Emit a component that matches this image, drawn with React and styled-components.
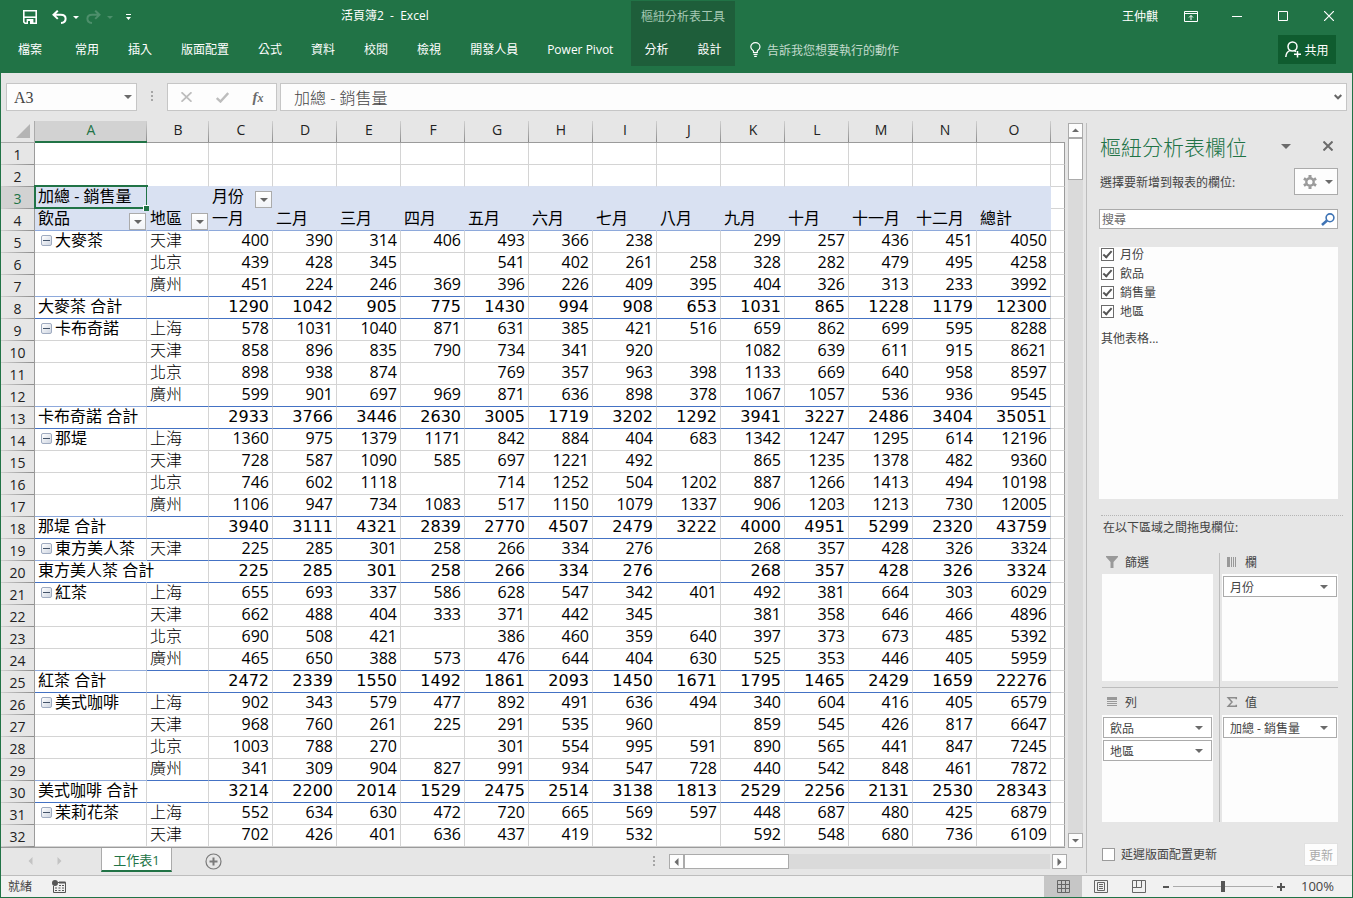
import React, { useState } from 'react';
import styled, { createGlobalStyle } from 'styled-components';

const GREEN = '#217346';
const UI_FONT = '"Open Sans", "Noto Sans CJK TC", sans-serif';

const columns = ['A', 'B', 'C', 'D', 'E', 'F', 'G', 'H', 'I', 'J', 'K', 'L', 'M', 'N', 'O'];

const months = ['一月', '二月', '三月', '四月', '五月', '六月', '七月', '八月', '九月', '十月', '十一月', '十二月', '總計'];

// '-' is an empty cell
const groups = [
  {
    name: '大麥茶',
    rows: [
      ['天津', '400 390 314 406 493 366 238 - 299 257 436 451 4050'],
      ['北京', '439 428 345 - 541 402 261 258 328 282 479 495 4258'],
      ['廣州', '451 224 246 369 396 226 409 395 404 326 313 233 3992'],
    ],
    total: '1290 1042 905 775 1430 994 908 653 1031 865 1228 1179 12300',
  },
  {
    name: '卡布奇諾',
    rows: [
      ['上海', '578 1031 1040 871 631 385 421 516 659 862 699 595 8288'],
      ['天津', '858 896 835 790 734 341 920 - 1082 639 611 915 8621'],
      ['北京', '898 938 874 - 769 357 963 398 1133 669 640 958 8597'],
      ['廣州', '599 901 697 969 871 636 898 378 1067 1057 536 936 9545'],
    ],
    total: '2933 3766 3446 2630 3005 1719 3202 1292 3941 3227 2486 3404 35051',
  },
  {
    name: '那堤',
    rows: [
      ['上海', '1360 975 1379 1171 842 884 404 683 1342 1247 1295 614 12196'],
      ['天津', '728 587 1090 585 697 1221 492 - 865 1235 1378 482 9360'],
      ['北京', '746 602 1118 - 714 1252 504 1202 887 1266 1413 494 10198'],
      ['廣州', '1106 947 734 1083 517 1150 1079 1337 906 1203 1213 730 12005'],
    ],
    total: '3940 3111 4321 2839 2770 4507 2479 3222 4000 4951 5299 2320 43759',
  },
  {
    name: '東方美人茶',
    rows: [['天津', '225 285 301 258 266 334 276 - 268 357 428 326 3324']],
    total: '225 285 301 258 266 334 276 - 268 357 428 326 3324',
  },
  {
    name: '紅茶',
    rows: [
      ['上海', '655 693 337 586 628 547 342 401 492 381 664 303 6029'],
      ['天津', '662 488 404 333 371 442 345 - 381 358 646 466 4896'],
      ['北京', '690 508 421 - 386 460 359 640 397 373 673 485 5392'],
      ['廣州', '465 650 388 573 476 644 404 630 525 353 446 405 5959'],
    ],
    total: '2472 2339 1550 1492 1861 2093 1450 1671 1795 1465 2429 1659 22276',
  },
  {
    name: '美式咖啡',
    rows: [
      ['上海', '902 343 579 477 892 491 636 494 340 604 416 405 6579'],
      ['天津', '968 760 261 225 291 535 960 - 859 545 426 817 6647'],
      ['北京', '1003 788 270 - 301 554 995 591 890 565 441 847 7245'],
      ['廣州', '341 309 904 827 991 934 547 728 440 542 848 461 7872'],
    ],
    total: '3214 2200 2014 1529 2475 2514 3138 1813 2529 2256 2131 2530 28343',
  },
  {
    name: '茉莉花茶',
    rows: [
      ['上海', '552 634 630 472 720 665 569 597 448 687 480 425 6879'],
      ['天津', '702 426 401 636 437 419 532 - 592 548 680 736 6109'],
    ],
  },
];

const split = (text) => text.split(' ').map((v) => (v === '-' ? '' : v));

const pivotRows = groups.flatMap((group) => {
  const list = group.rows.map(([city, values], i) => ({
    label: i === 0 ? group.name : '',
    city,
    values: split(values),
    last: Boolean(group.total) && i === group.rows.length - 1,
  }));
  if (group.total) {
    list.push({ label: `${group.name} 合計`, city: '', values: split(group.total), total: true });
  }
  return list;
});

function App() {
  return (
    <>
      <GlobalStyle />
      <Window>
        <TitleRibbon />
        <FormulaBar />
        <Workspace>
          <SheetArea>
            <GridRow>
              <Sheet />
              <VerticalScroll />
            </GridRow>
            <SheetTabs />
          </SheetArea>
          <FieldPane />
        </Workspace>
        <StatusBar />
      </Window>
    </>
  );
}

function TitleRibbon() {
  return (
    <Ribbon>
      <RibbonLeft>
        <TitleRow>
          <QuickAccess>
            <IconButton $w={30} aria-label="儲存">
              <svg width="14" height="14" viewBox="0 0 14 14" fill="none" stroke="#fff" strokeWidth="1.6">
                <path d="M.8 .8h12.4v12.4H2L.8 12z" />
                <path d="M.8 7.2h12.4" />
                <path d="M3.6 9h6.8v5H3.6z" fill="#fff" stroke="none" />
                <path d="M5 11h2v3H5z" fill={GREEN} stroke="none" />
              </svg>
            </IconButton>
            <IconButton $w={28} aria-label="復原">
              <UndoIcon />
            </IconButton>
            <Caret $color="#fff" $size={3} />
            <IconButton $w={28} aria-label="取消復原">
              <UndoIcon flip />
            </IconButton>
            <Caret $color="#4d8f6b" $size={3} />
            <IconButton $w={30} aria-label="自訂快速存取工具列">
              <svg width="7" height="7" viewBox="0 0 7 7" fill="#fff">
                <path d="M1 0h5v1H1zM1 3h5L3.500 6z" />
              </svg>
            </IconButton>
          </QuickAccess>
          <DocTitle>活頁簿2&nbsp; -&nbsp; Excel</DocTitle>
        </TitleRow>
        <TabRow>
          <FileTab>檔案</FileTab>
          {['常用', '插入', '版面配置', '公式', '資料', '校閱', '檢視', '開發人員', 'Power Pivot'].map((t) => (
            <Tab key={t}>{t}</Tab>
          ))}
        </TabRow>
      </RibbonLeft>
      <ContextTabs>
        <ContextTitle>樞紐分析表工具</ContextTitle>
        <ContextRow>
          <Tab>分析</Tab>
          <Tab>設計</Tab>
        </ContextRow>
      </ContextTabs>
      <RibbonRight>
        <WindowRow>
          <UserName>王仲麒</UserName>
          <IconButton $w={46} aria-label="功能區顯示選項">
            <svg width="14" height="11" viewBox="0 0 14 11" fill="none" stroke="#fff">
              <path d="M.5 .5h13v10H.5zM.5 2.500h13M7 9V4.500M5 6.500l2-2 2 2" />
            </svg>
          </IconButton>
          <IconButton $w={46} aria-label="最小化">
            <svg width="10" height="10" viewBox="0 0 10 10" stroke="#fff">
              <path d="M0 5.500h10" />
            </svg>
          </IconButton>
          <IconButton $w={46} aria-label="最大化">
            <svg width="10" height="10" viewBox="0 0 10 10" fill="none" stroke="#fff">
              <path d="M.5 .5h9v9h-9z" />
            </svg>
          </IconButton>
          <IconButton $w={46} aria-label="關閉">
            <svg width="10" height="10" viewBox="0 0 10 10" stroke="#fff" strokeWidth="1.200">
              <path d="M0 0l10 10M10 0L0 10" />
            </svg>
          </IconButton>
        </WindowRow>
        <TellRow>
          <TellMe>
            <svg width="11" height="15" viewBox="0 0 11 15" fill="none" stroke="#fff" strokeWidth="1.200">
              <path d="M3.500 10.500V9C1.800 7.700.8 6.500.8 4.900a4.600 4.300 0 0 1 9.200 0C10 6.500 9 7.700 7.300 9v1.500z" />
              <path d="M3.500 12.300h4M4.200 14.300h2.600" />
            </svg>
            告訴我您想要執行的動作
          </TellMe>
          <ShareButton>
            <svg width="16" height="17" viewBox="0 0 16 17" fill="none" stroke="#fff" strokeWidth="1.500">
              <circle cx="7.500" cy="5.500" r="4.500" />
              <path d="M.8 16c.2-3.600 2-5.800 4.700-6.600M9.500 9.600l1.500 1M9 13.300h7M12.500 10v6.600" />
            </svg>
            共用
          </ShareButton>
        </TellRow>
      </RibbonRight>
    </Ribbon>
  );
}

const UndoIcon = ({ flip }) => (
  <svg width="15" height="14" viewBox="0 0 15 14" fill="none" stroke={flip ? '#4d8f6b' : '#fff'} strokeWidth="2">
    <g transform={flip ? 'translate(15 0) scale(-1 1)' : undefined}>
      <path d="M5.800 .7L1.500 4.800l4.300 4.100M1.800 4.800h7c3 0 4.800 1.500 4.800 3.900 0 2.600-1.800 4-4.600 4.200" />
    </g>
  </svg>
);

function FormulaBar() {
  return (
    <FormulaRow>
      <NameBox>
        <NameInput aria-label="名稱方塊" defaultValue="A3" />
        <PlainButton aria-label="名稱清單">
          <Caret $color="#6b6b6b" $size={4} />
        </PlainButton>
      </NameBox>
      <Grip />
      <FxBox>
        <IconButton $w={36} aria-label="取消">
          <svg width="11" height="10" viewBox="0 0 11 10" stroke="#bdbdbd" strokeWidth="1.800">
            <path d="M.5 .3l10 9.400M10.500 .3L.5 9.700" />
          </svg>
        </IconButton>
        <IconButton $w={36} aria-label="輸入">
          <svg width="13" height="11" viewBox="0 0 13 11" fill="none" stroke="#bdbdbd" strokeWidth="2.400">
            <path d="M.8 6l3.700 3.500L12.200 1" />
          </svg>
        </IconButton>
        <FxButton>
          f<sub>x</sub>
        </FxButton>
      </FxBox>
      <FormulaBox>
        <FormulaInput aria-label="資料編輯列" defaultValue="加總 - 銷售量" />
        <PlainButton aria-label="展開資料編輯列">
          <svg width="8" height="6" viewBox="0 0 8 6" fill="none" stroke="#666" strokeWidth="2">
            <path d="M.7 1L4 4.300 7.300 1" />
          </svg>
        </PlainButton>
      </FormulaBox>
    </FormulaRow>
  );
}

const FilterButton = () => (
  <DropSquare aria-label="篩選">
    <Caret $color="#666" $size={4} />
  </DropSquare>
);

function Sheet() {
  return (
    <SheetPort>
      <Table>
        <colgroup>
          <Col $w={34} />
          <Col $w={112} />
          <Col $w={62} />
          {months.slice(0, 12).map((m) => (
            <Col key={m} $w={64} />
          ))}
          <Col $w={74} />
          <col />
        </colgroup>
        <thead>
          <tr>
            <Corner>
              <svg width="14" height="14" viewBox="0 0 14 14" fill="#b4b4b4">
                <path d="M14 0v14H0z" />
              </svg>
            </Corner>
            {columns.map((c) => (
              <ColHead key={c} scope="col" $active={c === 'A'}>
                {c}
              </ColHead>
            ))}
            <ColHead aria-hidden="true" $plain />
          </tr>
        </thead>
        <tbody>
          {[1, 2].map((n) => (
            <tr key={n}>
              <RowHead scope="row">{n}</RowHead>
              {columns.map((c) => (
                <Cell key={c} $line={n === 2 ? '#d9e1f2' : undefined} />
              ))}
              <Cell />
            </tr>
          ))}
          <tr>
            <RowHead scope="row" $active>3</RowHead>
            <HeadCell $selected>
              加總 - 銷售量
              <FillHandle />
            </HeadCell>
            <HeadCell />
            <HeadCell $filter>
              <CellRow>月份<FilterButton /></CellRow>
            </HeadCell>
            {columns.slice(3).map((c) => (
              <HeadCell key={c} />
            ))}
            <Cell />
          </tr>
          <tr>
            <RowHead scope="row">4</RowHead>
            <HeadCell $filter $line="#8ea9db">
              <CellRow>飲品<FilterButton /></CellRow>
            </HeadCell>
            <HeadCell $filter $line="#8ea9db">
              <CellRow>地區<FilterButton /></CellRow>
            </HeadCell>
            {months.map((m) => (
              <HeadCell key={m} $line="#8ea9db">{m}</HeadCell>
            ))}
            <Cell />
          </tr>
          {pivotRows.map((row, i) => {
            const line = row.total || row.last ? '#4472c4' : undefined;
            return (
              <tr key={i}>
                <RowHead scope="row">{i + 5}</RowHead>
                <Cell $medium $line={row.last ? '#8ea9db' : line} $spill={row.label.length > 7}>
                  {row.total ? (
                    row.label
                  ) : (
                    row.label && (
                      <GroupLabel>
                        <Collapse aria-label="摺疊">
                          <svg width="7" height="1"><path d="M0 0h7v1H0z" fill="#44546a" /></svg>
                        </Collapse>
                        {row.label}
                      </GroupLabel>
                    )
                  )}
                </Cell>
                <Cell $line={line}>{row.city}</Cell>
                {row.values.map((v, k) => (
                  <NumberCell key={k} $line={line} $total={row.total}>{v}</NumberCell>
                ))}
                <Cell />
              </tr>
            );
          })}
        </tbody>
      </Table>
    </SheetPort>
  );
}

function VerticalScroll() {
  return (
    <VScroll>
      <ScrollButton aria-label="向上捲動"><Arrow dir="up" /></ScrollButton>
      <VThumb />
      <Spacer />
      <ScrollButton aria-label="向下捲動"><Arrow dir="down" /></ScrollButton>
    </VScroll>
  );
}

const arrowPaths = {
  up: 'M1 6h7L4.500 2.500z',
  down: 'M1 3h7L4.500 6.500z',
  left: 'M6.500 1v8L2.500 5z',
  right: 'M2.500 1v8l4-4z',
};

const Arrow = ({ dir, color = '#6b6b6b' }) => (
  <svg width="9" height="10" viewBox="0 0 9 10" fill={color}>
    <path d={arrowPaths[dir]} />
  </svg>
);

function SheetTabs() {
  return (
    <TabsBar>
      <TabNav>
        <PlainButton aria-label="上一張"><Arrow dir="left" color="#c3c3c3" /></PlainButton>
        <PlainButton aria-label="下一張"><Arrow dir="right" color="#c3c3c3" /></PlainButton>
      </TabNav>
      <SheetTab>工作表1</SheetTab>
      <AddSheet aria-label="新工作表">
        <svg width="17" height="17" viewBox="0 0 17 17" fill="none" stroke="#7a7a7a">
          <circle cx="8.500" cy="8.500" r="7.500" strokeWidth="1.200" />
          <path d="M8.500 4.500v8M4.500 8.500h8" strokeWidth="2" />
        </svg>
      </AddSheet>
      <Spacer />
      <Grip />
      <HScroll>
        <ScrollButton aria-label="向左捲動"><Arrow dir="left" /></ScrollButton>
        <HThumb />
        <HTrack />
        <ScrollButton aria-label="向右捲動"><Arrow dir="right" /></ScrollButton>
      </HScroll>
    </TabsBar>
  );
}

function FieldPane() {
  const [checked, setChecked] = useState({ 月份: true, 飲品: true, 銷售量: true, 地區: true });
  const toggle = (name) => setChecked({ ...checked, [name]: !checked[name] });
  return (
    <Pane>
      <PaneHead>
        <PaneTitle>樞紐分析表欄位</PaneTitle>
        <IconButton $w={42} aria-label="工作窗格選項">
          <Caret $color="#6b6b6b" $size={5} />
        </IconButton>
        <IconButton $w={42} aria-label="關閉窗格">
          <svg width="10" height="10" viewBox="0 0 10 10" stroke="#6b6b6b" strokeWidth="2">
            <path d="M.5 .5l9 9M9.500 .5l-9 9" />
          </svg>
        </IconButton>
      </PaneHead>
      <PaneTools>
        <PaneText>選擇要新增到報表的欄位:</PaneText>
        <GearButton aria-label="工具">
          <svg width="14" height="14" viewBox="0 0 14 14" fill="none" stroke="#9a9a9a">
            <circle cx="7" cy="7" r="3.700" strokeWidth="2.400" />
            <path
              d="M7 0v2.500M7 11.500V14M.9 3.500l2.200 1.200M10.900 9.300l2.200 1.200M.9 10.500l2.200-1.200M10.900 4.700l2.200-1.200"
              strokeWidth="3"
            />
          </svg>
          <Caret $color="#6b6b6b" $size={4} />
        </GearButton>
      </PaneTools>
      <SearchBox>
        <SearchInput placeholder="搜尋" aria-label="搜尋" />
        <svg width="14" height="13" viewBox="0 0 14 13" fill="none" stroke="#3f74b5">
          <circle cx="9" cy="4.800" r="3.900" strokeWidth="1.600" />
          <path d="M6 7.600L1 12" strokeWidth="2.600" />
        </svg>
      </SearchBox>
      <FieldList>
        {Object.keys(checked).map((name) => (
          <FieldLabel key={name}>
            <Check type="checkbox" checked={checked[name]} onChange={() => toggle(name)} />
            {name}
          </FieldLabel>
        ))}
        <MoreLink href="#tables">其他表格...</MoreLink>
      </FieldList>
      <DragHint>在以下區域之間拖曳欄位:</DragHint>
      <Areas>
        <Area>
          <AreaHead>
            <svg width="12" height="12" viewBox="0 0 12 12" fill="#999">
              <path d="M0 0h12v1L7.500 6v6h-3V6L0 1z" />
            </svg>
            篩選
          </AreaHead>
          <DropBox />
        </Area>
        <Area $right>
          <AreaHead>
            <svg width="12" height="12" viewBox="0 0 12 12" fill="#999">
              <path d="M1 1h3v10H1zM5 1h1v10H5zM7 1h1v10H7zM9 1h1v10H9z" />
            </svg>
            欄
          </AreaHead>
          <DropBox>
            <Pill>月份<Caret $color="#6b6b6b" $size={4} /></Pill>
          </DropBox>
        </Area>
        <Area $bottom>
          <AreaHead $tall>
            <svg width="12" height="12" viewBox="0 0 12 12" fill="#999">
              <path d="M1 1h10v3H1zM1 5h10v1H1zM1 7h10v1H1zM1 9h10v1H1z" />
            </svg>
            列
          </AreaHead>
          <DropBox>
            <Pill>飲品<Caret $color="#6b6b6b" $size={4} /></Pill>
            <Pill>地區<Caret $color="#6b6b6b" $size={4} /></Pill>
          </DropBox>
        </Area>
        <Area $right $bottom>
          <AreaHead $tall>
            <svg width="12" height="12" viewBox="0 0 12 12" fill="none" stroke="#8c8c8c" strokeWidth="1.500">
              <path d="M10.300 3.300V1.700H2.200L6 6l-3.800 4.300h8.100V8.700" />
            </svg>
            值
          </AreaHead>
          <DropBox>
            <Pill>加總 - 銷售量<Caret $color="#6b6b6b" $size={4} /></Pill>
          </DropBox>
        </Area>
      </Areas>
      <DeferRow>
        <DeferLabel>
          <Check type="checkbox" $light />
          延遲版面配置更新
        </DeferLabel>
        <UpdateButton disabled>更新</UpdateButton>
      </DeferRow>
    </Pane>
  );
}

function StatusBar() {
  return (
    <Status>
      <StatusText>就緒</StatusText>
      <PlainButton aria-label="錄製巨集">
        <svg width="14" height="13" viewBox="0 0 14 13" fill="none" stroke="#555">
          <path d="M6 2.500h7.500v10h-12V6M7 5.500h2M10 5.500h2M3 8h2M6.500 8h2M10 8h2M3 10.500h2M6.500 10.500h2M10 10.500h2" />
          <path d="M7 2.500h6.500" strokeWidth="2" />
          <circle cx="3" cy="3" r="3" fill="#555" stroke="none" />
        </svg>
      </PlainButton>
      <Spacer />
      <ViewButton $active aria-label="標準模式">
        <svg width="13" height="13" viewBox="0 0 13 13" fill="none" stroke="#666">
          <path d="M.5 .5h12v12H.5zM.5 4.500h12M.5 8.500h12M4.500 .5v12M8.500 .5v12" />
        </svg>
      </ViewButton>
      <ViewButton aria-label="整頁模式">
        <svg width="14" height="13" viewBox="0 0 14 13" fill="none" stroke="#666">
          <path d="M.5 .5h13v12H.5zM3.500 2.500h7v8h-7zM5 4.500h4M5 6.500h4M5 8.500h4" />
        </svg>
      </ViewButton>
      <ViewButton aria-label="分頁預覽">
        <svg width="14" height="13" viewBox="0 0 14 13" fill="none" stroke="#666">
          <path d="M.5 .5h13v12H.5zM4.500 .5v7M9.500 .5v7M.5 7.500h9" />
        </svg>
      </ViewButton>
      <ZoomControl>
        <PlainButton aria-label="縮小">
          <svg width="6" height="10" viewBox="0 0 6 10"><path d="M0 4h6v2H0z" fill="#555" /></svg>
        </PlainButton>
        <ZoomSlider type="range" aria-label="縮放" min="0" max="200" defaultValue="100" />
        <PlainButton aria-label="放大">
          <svg width="8" height="10" viewBox="0 0 8 10"><path d="M0 4h8v2H0zM3 1h2v8H3z" fill="#555" /></svg>
        </PlainButton>
      </ZoomControl>
      <ZoomText>100%</ZoomText>
    </Status>
  );
}

const GlobalStyle = createGlobalStyle`
  *, *::before, *::after {
    box-sizing: border-box;
  }

  body {
    margin: 0;
    font-family: ${UI_FONT};
    font-size: 12px;
    color: #444;
    background: #e6e6e6;
  }

  button, input {
    font-family: inherit;
    font-size: inherit;
    color: inherit;
    margin: 0;
    padding: 0;
    border: 0;
    background: none;
  }

  svg {
    display: block;
    flex: none;
  }
`;

const Window = styled.div`
  display: flex;
  flex-direction: column;
  min-height: 100vh;
  border: 1px solid ${GREEN};
  background: #e6e6e6;
`;

const Spacer = styled.div`
  flex: 1;
`;

const Caret = styled.i`
  width: 0;
  height: 0;
  flex: none;
  border: ${(p) => p.$size}px solid transparent;
  border-top-color: ${(p) => p.$color};
  border-bottom-width: 0;
`;

const PlainButton = styled.button`
  display: flex;
  align-items: center;
  justify-content: center;
`;

const IconButton = styled(PlainButton)`
  width: ${(p) => p.$w}px;
  height: 30px;
`;

/* title bar and ribbon tabs */

const Ribbon = styled.header`
  display: flex;
  height: 72px;
  color: #fff;
  background: ${GREEN};
`;

const RibbonLeft = styled.div`
  width: 630px;
`;

const TitleRow = styled.div`
  display: flex;
  align-items: center;
  height: 32px;
`;

const QuickAccess = styled.div`
  display: flex;
  align-items: center;
  width: 340px;
  padding-left: 14px;
`;

const DocTitle = styled.div`
  line-height: 16px;
  padding-bottom: 2px;
`;

const TabRow = styled.nav`
  display: flex;
  gap: 29px;
  padding-left: 17px;
`;

const Tab = styled.button`
  height: 34px;
  line-height: 34px;
  color: #fff;
  white-space: nowrap;
`;

const FileTab = styled(Tab)`
  margin-right: 4px;
`;

const ContextTabs = styled.div`
  width: 104px;
  height: 65px;
  background: #1e5e3a;
`;

const ContextTitle = styled.div`
  height: 32px;
  line-height: 32px;
  text-align: center;
  color: #a6c9b4;
`;

const ContextRow = styled.div`
  display: flex;
  justify-content: center;
  gap: 29px;
`;

const RibbonRight = styled.div`
  flex: 1;
`;

const WindowRow = styled.div`
  display: flex;
  align-items: center;
  justify-content: flex-end;
  height: 30px;
`;

const UserName = styled.span`
  margin-right: 10px;
`;

const TellRow = styled.div`
  display: flex;
  align-items: center;
  justify-content: space-between;
  padding: 4px 16px 0 15px;
`;

const TellMe = styled.button`
  display: flex;
  align-items: center;
  gap: 6px;
  color: #c3dbcd;
`;

const ShareButton = styled.button`
  display: flex;
  align-items: center;
  justify-content: center;
  gap: 3px;
  width: 58px;
  height: 29px;
  color: #fff;
  background: #0f5c2f;
`;

/* formula bar */

const FormulaRow = styled.div`
  display: flex;
  padding: 10px 5px;
`;

const BarBox = styled.div`
  display: flex;
  align-items: center;
  height: 28px;
  border: 1px solid #c6c6c6;
  background: #fdfdfd;
`;

const NameBox = styled(BarBox)`
  width: 131px;
  padding: 0 4px 0 7px;
`;

const NameInput = styled.input`
  flex: 1;
  min-width: 0;
  padding-top: 2px;
  font-family: "Liberation Serif", "Noto Sans CJK TC", serif;
  font-size: 16px;
  outline: none;
`;

const Grip = styled.div`
  width: 30px;
  height: 12px;
  align-self: center;
  background: linear-gradient(#a6a6a6 2px, transparent 2px) center top / 2px 4px repeat-y;
`;

const FxBox = styled(BarBox)`
  width: 110px;
  margin-right: 3px;
`;

const FxButton = styled(PlainButton)`
  width: 36px;
  font: italic bold 15px/20px "Liberation Serif", serif;
  color: #6b6b6b;

  sub {
    font-size: 12px;
    line-height: 12px;
    align-self: center;
    padding-top: 2px;
  }
`;

const FormulaBox = styled(BarBox)`
  flex: 1;
  padding: 0 4px 0 13px;
`;

const FormulaInput = styled.input`
  flex: 1;
  font-size: 16px;
  font-weight: 300;
  outline: none;
`;

/* sheet */

const Workspace = styled.div`
  display: flex;
  flex: 1;
`;

const SheetArea = styled.main`
  flex: 1;
  min-width: 0;
  display: flex;
  flex-direction: column;
`;

const GridRow = styled.div`
  display: flex;
  flex: 1;
`;

const SheetPort = styled.div`
  flex: 1;
  min-width: 0;
  border-bottom: 1px solid #9b9b9b;
  background: #fff;
`;

const Table = styled.table`
  width: 100%;
  table-layout: fixed;
  border-collapse: separate;
  border-spacing: 0;
  color: #000;
`;

const Col = styled.col`
  width: ${(p) => p.$w}px;
`;

const Corner = styled.td`
  height: 22px;
  padding: 0 2px 2px 15px;
  border-right: 1px solid #ababab;
  border-bottom: 1px solid #ababab;
  background: #e6e6e6;
`;

const ColHead = styled.th`
  height: 22px;
  padding: 0 0 3px;
  font-size: 14px;
  line-height: 18px;
  font-weight: 400;
  color: ${(p) => (p.$active ? GREEN : '#222')};
  border-bottom: 1px solid #9b9b9b;
  background: ${(p) =>
    p.$plain ? '#e6e6e6' : `linear-gradient(#d0d0d0, #8c8c8c) right / 1px 100% no-repeat ${p.$active ? '#d2d2d2' : '#e6e6e6'}`};
  ${(p) => p.$active && `border-bottom: 2px solid ${GREEN}; padding-bottom: 2px;`}
`;

const RowHead = styled.th`
  height: 22px;
  padding: 2px 0 0;
  font-size: 14px;
  line-height: 18px;
  font-weight: 400;
  color: ${(p) => (p.$active ? GREEN : '#222')};
  border-right: 1px solid #9b9b9b;
  background: linear-gradient(to right, #d0d0d0, #8c8c8c) bottom / 100% 1px no-repeat
    ${(p) => (p.$active ? '#d2d2d2' : '#e6e6e6')};
`;

const Cell = styled.td`
  height: 22px;
  padding: 0 3px 2px;
  white-space: nowrap;
  font-size: 16px;
  line-height: 19px;
  font-weight: ${(p) => (p.$medium ? 400 : 300)};
  border-right: 1px solid ${(p) => (p.$spill ? 'transparent' : '#d4d4d4')};
  border-bottom: 1px solid ${(p) => p.$line || '#d4d4d4'};

  &:last-child {
    border-right-color: #9b9b9b;
  }
`;

const HeadCell = styled(Cell)`
  position: relative;
  font-weight: 400;
  background: #d9e1f2;
  border-right-color: #d9e1f2;
  border-bottom-color: ${(p) => p.$line || '#d9e1f2'};
  ${(p) => p.$filter && 'padding: 0 0 0 3px;'}

  ${(p) =>
    p.$selected &&
    `&::after {
      content: '';
      position: absolute;
      inset: -2px -2px -1px -1px;
      border: 2px solid ${GREEN};
    }`}
`;

const FillHandle = styled.i`
  position: absolute;
  right: -3px;
  bottom: -3px;
  width: 6px;
  height: 6px;
  z-index: 1;
  border: solid #fff;
  border-width: 1px 0 0 1px;
  background: ${GREEN};
`;

const NumberCell = styled(Cell)`
  text-align: right;
  font-weight: 400;
  font-family: ${(p) => (p.$total ? '"DejaVu Sans", sans-serif' : UI_FONT)};
`;

const CellRow = styled.div`
  display: flex;
  align-items: flex-start;
  justify-content: space-between;
  height: 21px;
`;

const DropSquare = styled.button`
  display: flex;
  align-items: center;
  justify-content: center;
  align-self: flex-end;
  width: 17px;
  height: 17px;
  border: 1px solid #ababab;
  background: linear-gradient(#fff, #f1f3f7);
`;

const GroupLabel = styled.div`
  display: flex;
  align-items: center;
  gap: 3px;
  padding-left: 3px;
`;

const Collapse = styled(PlainButton)`
  width: 11px;
  height: 11px;
  border: 1px solid #9fabc0;
  border-radius: 2px;
  background: linear-gradient(135deg, #fff, #cfd6e2);
`;

const VScroll = styled.div`
  display: flex;
  flex-direction: column;
  width: 15px;
  margin: 2px 3px 0 3px;
  background: #dadada;
`;

const ScrollButton = styled(PlainButton)`
  width: 15px;
  height: 15px;
  border: 1px solid #ababab;
  background: #fdfdfd;
`;

const VThumb = styled.div`
  height: 42px;
  border: 1px solid #ababab;
  background: #fff;
`;

const TabsBar = styled.div`
  display: flex;
  height: 27px;
  padding-right: 19px;
`;

const TabNav = styled.div`
  display: flex;
  justify-content: center;
  gap: 20px;
  width: 100px;
  padding: 0 12px 2px 0;
`;

const SheetTab = styled.button`
  height: 24px;
  width: 71px;
  border: solid #ababab;
  border-width: 0 1px;
  border-bottom: 2px solid ${GREEN};
  font-size: 13px;
  color: ${GREEN};
  background: #fff;
`;

const AddSheet = styled(PlainButton)`
  width: 82px;
`;

const HScroll = styled.div`
  display: flex;
  align-self: center;
`;

const HThumb = styled.div`
  width: 105px;
  border: 1px solid #ababab;
  background: #fff;
`;

const HTrack = styled.div`
  width: 261px;
  margin-right: 2px;
  background: #dadada;
`;

/* field list pane */

const Pane = styled.aside`
  display: flex;
  flex-direction: column;
  width: 266px;
  margin: 2px 0;
  padding: 9px 14px 7px 12px;
  border-left: 1px solid #bdbdbd;
`;

const PaneHead = styled.div`
  display: flex;
  align-items: center;
  height: 28px;
  margin-right: -11px;
`;

const PaneTitle = styled.h2`
  flex: 1;
  margin: 0;
  padding: 2px 0 0 1px;
  font-size: 21px;
  line-height: 28px;
  font-weight: 300;
  white-space: nowrap;
  color: ${GREEN};
`;

const PaneTools = styled.div`
  display: flex;
  align-items: center;
  justify-content: space-between;
  margin-top: 8px;
`;

const PaneText = styled.span`
  padding-left: 1px;
`;

const GearButton = styled(PlainButton)`
  gap: 8px;
  width: 44px;
  height: 27px;
  padding-left: 3px;
  border: 1px solid #ababab;
  background: #fdfdfd;
`;

const SearchBox = styled.div`
  display: flex;
  align-items: center;
  height: 20px;
  margin: 14px 0 18px;
  padding: 0 2px;
  border: 1px solid #ababab;
  background: #fff;
`;

const SearchInput = styled.input`
  flex: 1;
  min-width: 0;
  outline: none;

  &::placeholder {
    color: #6b6b6b;
  }
`;

const FieldList = styled.div`
  flex: 1;
  padding: 0 2px;
  background: #fdfdfd;
`;

const FieldLabel = styled.label`
  display: flex;
  align-items: center;
  gap: 6px;
  height: 19px;
  padding-bottom: 4px;
  line-height: 16px;
`;

const DeferLabel = styled(FieldLabel)`
  padding: 0;
`;

const Check = styled.input`
  appearance: none;
  position: relative;
  width: 13px;
  height: 13px;
  border: 1px solid ${(p) => (p.$light ? '#9b9b9b' : '#6b6b6b')};
  background: #fff;

  &:checked::after {
    content: '';
    position: absolute;
    left: 3px;
    top: 0;
    width: 5px;
    height: 9px;
    border: solid #555;
    border-width: 0 2px 2px 0;
    transform: rotate(42deg);
  }
`;

const MoreLink = styled.a`
  display: block;
  margin-top: 8px;
  line-height: 16px;
  color: #444;
  text-decoration: none;
`;

const DragHint = styled.div`
  margin: 16px -5px 0 2px;
  padding: 3px 2px 0;
  line-height: 18px;
  border-top: 1px dotted #b5b5b5;
`;

const Areas = styled.div`
  display: grid;
  grid-template-columns: 117px 1fr;
  margin: 16px 0 0 3px;
`;

const Area = styled.section`
  display: flex;
  flex-direction: column;
  height: ${(p) => (p.$bottom ? 135 : 134)}px;
  padding: ${(p) => (p.$right ? '0 0 0 2px' : '0 6px 0 0')};
  ${(p) => p.$right && 'border-left: 1px solid #bdbdbd;'}
  ${(p) => p.$bottom && 'border-top: 1px solid #bdbdbd;'}
  ${(p) => !p.$bottom && 'padding-bottom: 6px;'}
`;

const AreaHead = styled.div`
  display: flex;
  align-items: center;
  gap: 7px;
  flex: none;
  height: ${(p) => (p.$tall ? 27 : 21)}px;
  padding: 0 4px ${(p) => (p.$tall ? 0 : 4)}px;
`;

const DropBox = styled.div`
  flex: 1;
  display: flex;
  flex-direction: column;
  gap: 2px;
  padding: 2px 1px 0;
  background: #fdfdfd;
`;

const Pill = styled.button`
  display: flex;
  align-items: center;
  justify-content: space-between;
  height: 21px;
  padding: 0 8px 0 6px;
  border: 1px solid #ababab;
  background: #fff;
`;

const DeferRow = styled.div`
  display: flex;
  align-items: center;
  justify-content: space-between;
  margin: 21px 0 0 3px;
`;

const UpdateButton = styled.button`
  width: 34px;
  height: 23px;
  color: #ababab;
  border: 1px solid #e1e1e1;
  background: #fdfdfd;
`;

/* status bar */

const Status = styled.footer`
  display: flex;
  align-items: center;
  height: 22px;
  border-top: 1px solid #bdbdbd;
  background: #f1f1f1;
`;

const StatusText = styled.span`
  padding: 0 20px 2px 7px;
`;

const ViewButton = styled(PlainButton)`
  width: 38px;
  height: 21px;
  background: ${(p) => (p.$active ? '#c6c6c6' : 'none')};
`;

const ZoomControl = styled.div`
  display: flex;
  align-items: center;
  gap: 4px;
  padding-left: 5px;
`;

const ZoomSlider = styled.input`
  appearance: none;
  width: 100px;
  height: 11px;
  background: linear-gradient(#ababab, #ababab) center / 100% 1px no-repeat;

  &::-webkit-slider-thumb {
    appearance: none;
    width: 4px;
    height: 11px;
    background: #555;
  }
`;

const ZoomText = styled.span`
  width: 67px;
  padding: 0 0 2px 16px;
  font-size: 13px;
`;

export default App;
